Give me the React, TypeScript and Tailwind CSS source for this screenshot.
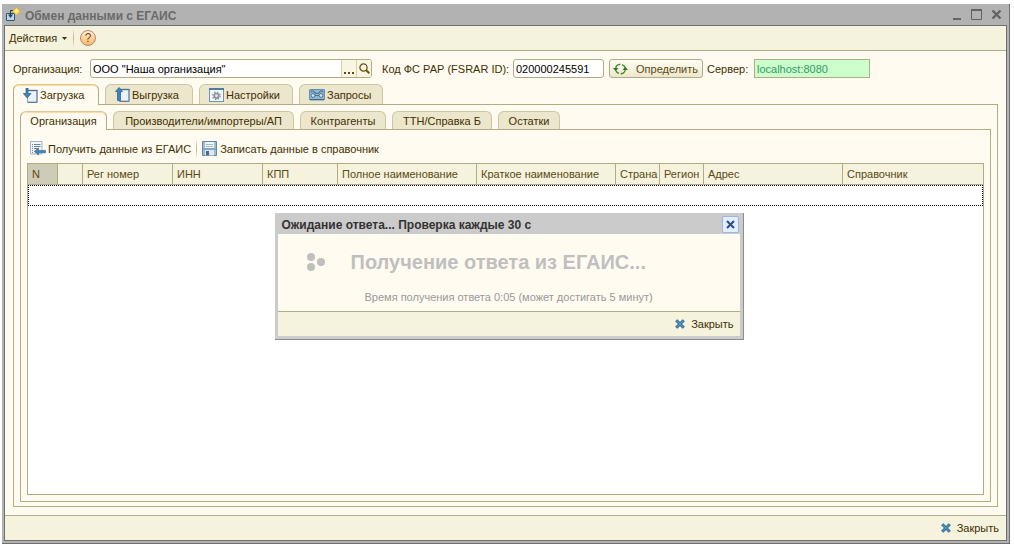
import type { ReactNode } from "react";

function LoadIcon({ up = false }: { up?: boolean }) {
  return (
    <svg width="15" height="15" viewBox="0 0 15 15" className="shrink-0" aria-hidden="true">
      <rect x="4.5" y="2.5" width="9.500" height="11.500" fill="#eaf2fa" stroke="#8fa6b8" />
      <path d="M4 2.500h10.500" stroke="#55718a" strokeWidth="1.400" />
      <path d="M14 2v12.500H4.500" fill="none" stroke="#5d7f99" />
      {up ? (
        <path d="M4 0.500 7.500 4.500H5.500v9H2.500v-9H0.500z" fill="#3f86b5" stroke="#245b86" strokeWidth="0.700" />
      ) : (
        <path d="M3 0h2v5.500h3L4.200 10 0.300 5.500H3z" fill="#3f86b5" stroke="#245b86" strokeWidth="0.700" />
      )}
    </svg>
  );
}

function SettingsIcon() {
  return (
    <svg width="15" height="14" viewBox="0 0 15 14" className="shrink-0" aria-hidden="true">
      <rect x="0.500" y="0.500" width="14" height="13" fill="#f3f7fa" stroke="#6d94b2" />
      <path d="M0 1h15" stroke="#4d7c9f" strokeWidth="2" />
      <circle cx="7.500" cy="7.800" r="2.300" fill="#e6e8ec" stroke="#8b8f99" strokeWidth="1.700" />
      <circle cx="7.500" cy="7.800" r="3.800" fill="none" stroke="#8b8f99" strokeWidth="1.200" strokeDasharray="1.500 1.480" />
    </svg>
  );
}

function RequestIcon() {
  return (
    <svg width="16" height="12" viewBox="0 0 16 12" className="shrink-0" aria-hidden="true">
      <rect x="0.500" y="0.500" width="15" height="10.500" rx="0.500" fill="#8fb6d3" stroke="#6890ad" />
      <path d="M1 10.500h14" stroke="#3f6b8b" />
      <path d="M2 3.500V2h3v1.500h1.500v1h3v-1H11V2h3v1.500" fill="none" stroke="#4a7391" />
      <circle cx="4" cy="6.500" r="1.900" fill="#d3e4f0" stroke="#4a7391" />
      <circle cx="12" cy="6.500" r="1.900" fill="#d3e4f0" stroke="#4a7391" />
      <path d="M6 6.500h4" stroke="#4a7391" />
    </svg>
  );
}

function ReceiveIcon() {
  return (
    <svg width="16" height="15" viewBox="0 0 16 15" className="shrink-0" aria-hidden="true">
      <path d="M0.500 0.500h11.500v12.500H0.500z" fill="#f4f7fa" stroke="#a3b4c2" />
      <path d="M2 3.500h1M4 3.500h6.500M2 5.500h1M4 5.500h6.500M2 7.500h1M4 7.500h4M2 9.500h1M2 11.500h1" stroke="#6e8192" />
      <path d="M4.300 10.500 8.500 7v2.400h7v2.400h-7V14z" fill="#3f86b5" stroke="#2b658f" strokeWidth="0.600" />
    </svg>
  );
}

function SaveIcon() {
  return (
    <svg width="15" height="15" viewBox="0 0 15 15" className="shrink-0" aria-hidden="true">
      <path d="M0.500 0.500h14v14h-14z" fill="#9fbdd2" stroke="#5f88a6" />
      <path d="M3 1h9v6H3z" fill="#f1f5f8" />
      <path d="M4 3.500h7M4 5.500h7" stroke="#a9bac7" />
      <path d="M0.500 8h14" stroke="#6d93af" />
      <path d="M3 9h9v5.500H3z" fill="#dfe7ed" />
      <path d="M4 10h3v4.500H4z" fill="#47698a" />
    </svg>
  );
}

function BlueCross() {
  return (
    <svg width="10" height="10" viewBox="0 0 10 10" className="shrink-0" aria-hidden="true">
      <path d="M1.200 1.200 8.800 8.800M8.800 1.200 1.200 8.800" stroke="#2a6592" strokeWidth="3" />
      <path d="M1.500 1.500 8.500 8.500M8.500 1.500 1.500 8.500" stroke="#5696c2" strokeWidth="1.400" />
    </svg>
  );
}

function AppIcon() {
  return (
    <svg width="15" height="15" viewBox="0 0 15 15" className="shrink-0" aria-hidden="true">
      <rect x="0.500" y="6.500" width="8" height="7" rx="0.500" fill="#b9d6ea" stroke="#34566f" />
      <path d="M7 3.500H4.500V8" fill="none" stroke="#1f3f57" />
      <path d="M2 7.500h5L4.500 11z" fill="#1f3f57" />
      <path d="M10.500 0.400 14.400 4.300 10.500 8.200 6.600 4.300z" fill="#ffe04d" stroke="#d9a92c" strokeWidth="0.700" />
      <path d="M10.500 2 12.300 4.300 10.500 5.500 8.700 4.300z" fill="#fff3a8" />
    </svg>
  );
}

function RefreshIcon() {
  return (
    <svg width="15" height="12" viewBox="0 0 15 12" className="shrink-0" aria-hidden="true">
      <path d="M2.700 6C2.700 3.200 4.800 1.300 7.300 1.300M12.300 6c0 2.800-2.100 4.700-4.600 4.700M9 1.600c1.700.5 2.900 1.700 3.200 3.400M6 10.400C4.500 9.900 3.500 9 3 7.700" fill="none" stroke="#3c8a2b" strokeWidth="1.400" />
      <path d="M0 5h5.400L2.700 8.200zM15 7H9.600l2.700-3.200z" fill="#2f7b20" />
    </svg>
  );
}

type TabProps = {
  label: string;
  width: string;
  active?: boolean;
  inner?: boolean;
  icon?: ReactNode;
};

function Tab({ label, width, active = false, inner = false, icon }: TabProps) {
  const size = inner ? "h-[18px]" : "h-5";
  const activeSize = inner ? "h-[19px]" : "h-[21px]";
  return (
    <button
      type="button"
      role="tab"
      aria-selected={active}
      className={`relative flex shrink-0 items-center gap-[2px] whitespace-nowrap rounded-t-[6px] border border-b-0 ${width} ${
        inner ? "justify-center" : "pl-[9px]"
      } ${
        active
          ? `${activeSize} z-10 border-[#b3ab84] border-t-[#dcc596] bg-[#fffbf0] shadow-[inset_0_1px_0_#ffdc9a]`
          : `${size} border-[#cdc5a3] bg-[#ece6cd]`
      }`}
    >
      {icon}
      {label}
    </button>
  );
}

const columns = [
  { title: "N", width: "w-[30px]" },
  { title: "", width: "w-[25px]" },
  { title: "Рег номер", width: "w-[90px]" },
  { title: "ИНН", width: "w-[90px]" },
  { title: "КПП", width: "w-[75px]" },
  { title: "Полное наименование", width: "w-[139px]" },
  { title: "Краткое наименование", width: "w-[139px]" },
  { title: "Страна", width: "w-[44px]" },
  { title: "Регион", width: "w-[44px]" },
  { title: "Адрес", width: "w-[139px]" },
  { title: "Справочник", width: "" },
];

function WaitDialog() {
  return (
    <section
      role="dialog"
      aria-labelledby="wait-title"
      className="absolute top-[209px] left-1/2 z-20 -ml-[231px] w-[469px] border-r border-b border-[#8c8c8c] bg-[#cbcbcb] px-[3px] pb-[3px]"
    >
      <header className="flex h-[21px] items-center justify-between pl-1">
        <h2 id="wait-title" className="pt-[2px] text-[12px] font-bold text-[#333]">
          Ожидание ответа... Проверка каждые 30 с
        </h2>
        <button
          type="button"
          aria-label="Закрыть окно"
          className="mt-[2px] mr-px flex size-[17px] items-center justify-center rounded-[2px] border border-[#9cb6e4] bg-[#e3eeff]"
        >
          <svg width="9" height="9" viewBox="0 0 9 9" aria-hidden="true">
            <path d="M1 1 8 8M8 1 1 8" stroke="#2c4a8c" strokeWidth="2" />
          </svg>
        </button>
      </header>
      <div className="h-[78px] border-b border-[#b3ab84] bg-[#fffbf0] px-[29px] pt-4">
        <div className="flex items-center gap-[26px]">
          <svg width="18" height="18" viewBox="0 0 18 18" className="shrink-0" aria-hidden="true">
            <g fill="#bfbfbf">
              <circle cx="4" cy="4" r="4" />
              <circle cx="4" cy="14" r="4" />
              <circle cx="14" cy="9" r="4" />
            </g>
          </svg>
          <p className="text-[20px] leading-6 font-bold whitespace-nowrap text-[#bfbfbf]">
            Получение ответа из ЕГАИС...
          </p>
        </div>
        <p className="mt-4 pl-[58px] whitespace-nowrap text-[#999]">
          Время получения ответа 0:05 (может достигать 5 минут)
        </p>
      </div>
      <footer className="flex h-6 items-center justify-end bg-[#f5f2dd] pr-[6px]">
        <button type="button" className="flex items-center gap-[6px]">
          <BlueCross />
          Закрыть
        </button>
      </footer>
    </section>
  );
}

export default function App() {
  return (
    <div className="flex min-h-screen bg-white pt-1 pr-1 pb-4 pl-[2px] font-['Liberation_Sans',sans-serif] text-[11px] leading-[14px] text-[#413003]">
      <main className="relative flex min-w-0 flex-1 flex-col border-r border-b border-[#6f6f6f] bg-[#b2b2b2] px-[2px] pb-[2px]">
        <header className="flex h-[21px] items-center gap-1 pr-[5px] pl-[2px]">
          <AppIcon />
          <h1 className="flex-1 pt-[2px] text-[12px] font-bold text-[#6a6a6a]">Обмен данными с ЕГАИС</h1>
          <div className="flex items-center gap-[9px] text-[#636363]">
            <button type="button" aria-label="Свернуть">
              <svg width="11" height="11" viewBox="0 0 11 11" aria-hidden="true">
                <path d="M2 10h8" stroke="currentColor" strokeWidth="2" />
              </svg>
            </button>
            <button type="button" aria-label="Развернуть">
              <svg width="11" height="11" viewBox="0 0 11 11" aria-hidden="true">
                <path d="M0 1h11" stroke="currentColor" strokeWidth="2" />
                <path d="M0.5 0.500V10.500H10.500V0.500" fill="none" stroke="currentColor" />
              </svg>
            </button>
            <button type="button" aria-label="Закрыть приложение">
              <svg width="11" height="11" viewBox="0 0 11 11" aria-hidden="true">
                <path d="M1.500 1.500 9.500 9.500M9.500 1.500 1.500 9.500" stroke="currentColor" strokeWidth="2.400" />
              </svg>
            </button>
          </div>
        </header>

        <div className="flex flex-1 flex-col border border-[#6f6f6f] bg-[#fffbf0]">
          <nav className="flex h-[25px] shrink-0 items-center border-b border-[#b3ab84] bg-[#f5f2dd] pl-1">
            <button type="button" className="flex items-center gap-[5px]">
              Действия
              <svg width="5" height="3" viewBox="0 0 5 3" aria-hidden="true">
                <path d="M0 0h5L2.500 3z" fill="#413003" />
              </svg>
            </button>
            <span className="ml-[6px] h-[18px] w-px bg-linear-to-b from-[#f0ecd4] via-[#bfb68e] to-[#f0ecd4]" />
            <button
              type="button"
              aria-label="Справка"
              className="ml-[6px] flex size-4 items-center justify-center rounded-full border border-[#b08a66] bg-linear-to-b from-[#fff0d8] to-[#fbb668] text-[12px] leading-none text-[#8a4513]"
            >
              ?
            </button>
          </nav>

          <div className="flex flex-1 flex-col p-2">
            <form className="flex h-[19px] items-stretch" onSubmit={(e) => e.preventDefault()}>
              <label htmlFor="org" className="flex w-[77px] shrink-0 items-center">
                Организация:
              </label>
              <div className="flex w-[282px] overflow-hidden rounded-[3px] border border-[#b3ab84] bg-white">
                <input id="org" defaultValue={'ООО "Наша организация"'} className="min-w-0 flex-1 px-[2px] text-black outline-none" />
                <button type="button" aria-label="Выбрать" className="flex w-[15px] items-end justify-center border-l border-[#d8d1b2] bg-[#f8f5e0] pb-[3px]">
                  <svg width="10" height="2" viewBox="0 0 10 2" aria-hidden="true">
                    <path d="M0 1h2M4 1h2M8 1h2" stroke="#5b4a12" strokeWidth="2" />
                  </svg>
                </button>
                <button type="button" aria-label="Найти" className="flex w-[15px] items-center justify-center border-l border-[#d8d1b2] bg-[#f8f5e0]">
                  <svg width="11" height="11" viewBox="0 0 11 11" aria-hidden="true">
                    <circle cx="4.500" cy="4.500" r="3.600" fill="none" stroke="#6b5515" strokeWidth="1.300" />
                    <path d="M7 7 10.300 10.300" stroke="#6b5515" strokeWidth="2" />
                  </svg>
                </button>
              </div>
              <label htmlFor="fsrar" className="flex w-[141px] shrink-0 items-center pl-[10px] whitespace-nowrap">
                Код ФС РАР (FSRAR ID):
              </label>
              <input id="fsrar" defaultValue="020000245591" className="w-[91px] rounded-[3px] border border-[#b3ab84] bg-white px-[2px] text-black outline-none" />
              <button
                type="button"
                className="ml-[5px] flex w-[94px] items-center gap-2 rounded-[3px] border border-[#b3ab84] bg-linear-to-b from-[#fffef4] to-[#ece7cb] pl-[3px] text-[#5b4a12]"
              >
                <RefreshIcon />
                Определить
              </button>
              <label htmlFor="server" className="flex w-[51px] shrink-0 items-center pl-1">
                Сервер:
              </label>
              <input id="server" defaultValue="localhost:8080" className="w-[116px] border border-[#b3ab84] bg-[#ccffcc] px-[2px] text-[#339966] outline-none" />
            </form>

            <div role="tablist" className="mt-[6px] flex h-5 items-start gap-[6px]">
              <Tab label="Загрузка" width="w-[86px]" active icon={<LoadIcon />} />
              <Tab label="Выгрузка" width="w-[88px]" icon={<LoadIcon up />} />
              <Tab label="Настройки" width="w-[94px]" icon={<SettingsIcon />} />
              <Tab label="Запросы" width="w-[84px]" icon={<RequestIcon />} />
            </div>

            <div className="flex flex-1 flex-col border border-[#b3ab84] px-[6px] pt-[6px] pb-1">
              <div role="tablist" className="flex h-[18px] items-start gap-[6px]">
                <Tab label="Организация" width="w-[87px]" active inner />
                <Tab label="Производители/импортеры/АП" width="w-[181px]" inner />
                <Tab label="Контрагенты" width="w-[86px]" inner />
                <Tab label="ТТН/Справка Б" width="w-[100px]" inner />
                <Tab label="Остатки" width="w-[62px]" inner />
              </div>

              <div className="flex flex-1 flex-col border border-[#b3ab84] px-[6px] pb-[6px]">
                <div className="flex h-[33px] items-center pt-1 pl-[3px]">
                  <button type="button" className="flex items-center gap-[2px]">
                    <ReceiveIcon />
                    Получить данные из ЕГАИС
                  </button>
                  <span className="mx-[5px] h-[18px] w-px bg-linear-to-b from-[#f6f1dc] via-[#bfb68e] to-[#f6f1dc]" />
                  <button type="button" className="flex items-center gap-[3px]">
                    <SaveIcon />
                    Записать данные в справочник
                  </button>
                </div>

                <div className="flex-1 border border-[#b3ab84] bg-white">
                  <table className="w-full table-fixed border-separate border-spacing-0">
                    <thead>
                      <tr className="h-[21px]">
                        {columns.map((c, i) => (
                          <th
                            key={i}
                            scope="col"
                            className={`overflow-hidden border-b border-[#b3ab84] p-0 pl-1 text-left font-normal whitespace-nowrap text-[#5b4a12] not-last:border-r ${c.width} ${
                              i === 0 ? "bg-[#ceccb6]" : "bg-[#f5f2dd]"
                            }`}
                          >
                            {c.title}
                          </th>
                        ))}
                      </tr>
                    </thead>
                    <tbody>
                      <tr>
                        <td colSpan={11} className="h-[21px] border border-dotted border-black p-0" />
                      </tr>
                    </tbody>
                  </table>
                </div>
              </div>
            </div>
          </div>

          <footer className="flex h-[25px] shrink-0 items-center justify-end border-t border-[#b3ab84] bg-[#f5f2dd] pr-[7px]">
            <button type="button" className="flex items-center gap-[6px]">
              <BlueCross />
              Закрыть
            </button>
          </footer>
        </div>

        <WaitDialog />
      </main>
    </div>
  );
}
